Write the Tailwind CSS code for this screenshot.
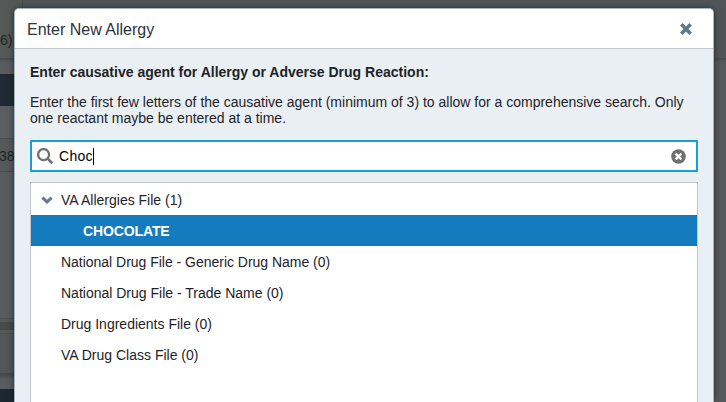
<!DOCTYPE html>
<html lang="en">
<head>
<meta charset="utf-8">
<title>Enter New Allergy</title>
<script src="https://cdn.jsdelivr.net/npm/@tailwindcss/browser@4"></script>
</head>
<body class="relative h-[402px] w-[726px] overflow-hidden bg-[#55595b] font-['Liberation_Sans',Arial,sans-serif] text-[14px] leading-4 text-[#1d2329]">
  <!-- dimmed page behind the dialog -->
  <div class="absolute inset-0 flex justify-between text-[#202427]">
    <div class="flex w-[60px] flex-col">
      <div class="flex h-[58px] w-[23px] items-center border-r border-[#494d50] bg-[#545857] pt-[22px]"><span>6)</span></div>
      <div class="h-4 bg-linear-to-b from-[#45494b] to-[#585c5e] to-30%"></div>
      <div class="h-8 bg-[#1f2a34]"></div>
      <div class="h-[33px] border-b border-[#4a4e50] bg-[#5a5e60]"></div>
      <div class="flex h-[33px] items-center border-b border-[#4a4e50] pt-px"><span class="-ml-[1px]">38</span></div>
      <div class="h-[147px] border-b border-[#4b4f51] bg-[#585c5e]"></div>
      <div class="h-[3px]"></div>
      <div class="h-2 bg-[#47494b]"></div>
      <div class="h-[3px]"></div>
      <div class="h-10 border-t border-[#4b4f51] bg-[#525658]"></div>
      <div class="h-4 bg-linear-to-b from-[#424648] to-[#585c5e] to-40%"></div>
      <div class="flex-1 bg-[#1c2730]"></div>
    </div>
    <div class="flex w-[20px] flex-col">
      <div class="h-[58px] bg-[#515558]"></div>
      <div class="h-1 bg-linear-to-b from-[#45494b] to-[#55595b]"></div>
    </div>
  </div>
  <div class="absolute left-[23px] top-0 h-2 w-[703px] bg-[#515558]"></div>

  <!-- dialog -->
  <div class="absolute inset-0 overflow-hidden pl-[14px] pt-2">
    <section class="flex h-[394px] w-[700px] flex-col overflow-hidden rounded-t-[5px] border border-b-0 border-[#a9b5bc] bg-[#eaeff3] shadow-[0_0_6px_rgba(0,0,0,0.5)]">
      <header class="flex h-[40px] shrink-0 items-center justify-between border-b border-[#c0cad0] bg-white pl-3 pr-[21px]">
        <h1 class="pt-[2px] text-[16px] leading-5 text-[#2b333b]">Enter New Allergy</h1>
        <svg class="mt-px h-3 w-3" viewBox="0 0 12 12" aria-label="Close"><path d="M2.6 2.6 9.4 9.4M9.4 2.6 2.6 9.4" stroke="#5f7989" stroke-width="3.6" stroke-linecap="square" stroke-linejoin="round"/></svg>
      </header>
      <div class="flex flex-1 flex-col px-[15px] pt-[15px]">
        <p class="whitespace-nowrap font-bold">Enter causative agent for Allergy or Adverse Drug Reaction:</p>
        <p class="mt-[14px] whitespace-nowrap">Enter the first few letters of the causative agent (minimum of 3) to allow for a comprehensive search. Only<br>one reactant maybe be entered at a time.</p>
        <div class="mt-[14px] flex h-8 shrink-0 items-center rounded-[1px] border-2 border-[#139fdc] bg-white pl-[5px] pr-[10px]">
          <svg class="h-4 w-4" viewBox="0 0 16 16" fill="none" stroke="#707070" aria-hidden="true"><circle cx="6.6" cy="6.6" r="5.5" stroke-width="2.3"/><path d="m10.9 10.9 3.6 3.6" stroke-width="2.6" stroke-linecap="round"/></svg>
          <span class="ml-[6px] tracking-[0.3px] text-black">Choc</span><span class="h-[17px] w-px bg-black"></span>
          <svg class="ml-auto h-[15px] w-[15px]" viewBox="0 0 15 15" aria-label="Clear"><circle cx="7.5" cy="7.5" r="7.3" fill="#707070"/><path d="m5.5 5.5 4 4m0-4-4 4" stroke="white" stroke-width="2.4" stroke-linecap="square"/></svg>
        </div>
        <ul class="mt-[10px] flex-1 border border-b-0 border-[#c2c5c8] bg-white">
          <li class="flex h-8 items-center pl-[10px] pt-[2px]"><svg class="h-2 w-3" viewBox="0 0 12 8" fill="none" stroke="#637b8b" aria-hidden="true"><path d="M1.4 1.6 6 5.9l4.6-4.3" stroke-width="3"/></svg><span class="ml-2">VA Allergies File (1)</span></li>
          <li class="flex h-[31px] items-center bg-[#137bbe] pl-[52px] pt-px font-bold tracking-[-0.12px] text-white">CHOCOLATE</li>
          <li class="flex h-[31px] items-center pl-[30px] pt-px tracking-[-0.02px]">National Drug File - Generic Drug Name (0)</li>
          <li class="flex h-[31px] items-center pl-[30px] pt-px">National Drug File - Trade Name (0)</li>
          <li class="flex h-[31px] items-center pl-[30px] pt-px">Drug Ingredients File (0)</li>
          <li class="flex h-[31px] items-center pl-[30px] pt-px">VA Drug Class File (0)</li>
        </ul>
      </div>
    </section>
  </div>
</body>
</html>
